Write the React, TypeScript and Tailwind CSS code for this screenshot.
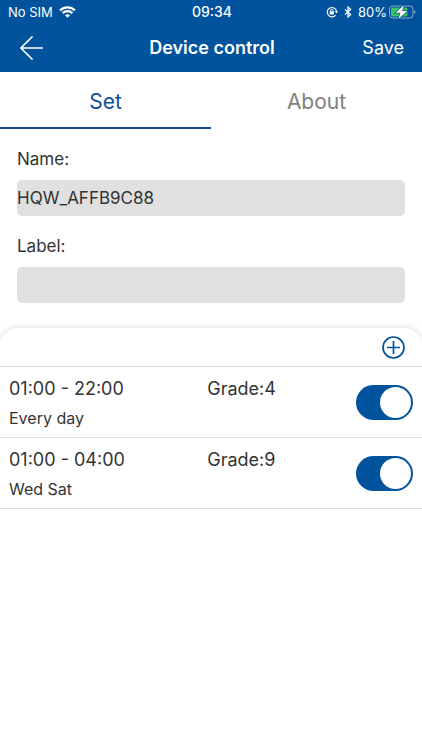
import { useState } from "react";

type Schedule = { id: number; time: string; grade: string; days: string; on: boolean };

const initialSchedules: Schedule[] = [
  { id: 1, time: "01:00 - 22:00", grade: "Grade:4", days: "Every day", on: true },
  { id: 2, time: "01:00 - 04:00", grade: "Grade:9", days: "Wed Sat", on: true },
];

function WifiIcon() {
  return (
    <svg width="17" height="12" viewBox="0 0 17 12" fill="none" stroke="white" strokeWidth="2.2" aria-hidden="true">
      <path d="M1 4.4a10.8 10.8 0 0 1 15 0" />
      <path d="M3.6 7.1a7 7 0 0 1 9.8 0" />
      <path d="M8.5 11.8 6 9.3a3.7 3.7 0 0 1 5 0z" fill="white" stroke="none" />
    </svg>
  );
}

function RotationLockIcon() {
  return (
    <svg width="12" height="12" viewBox="0 0 12 12" fill="none" stroke="white" aria-hidden="true">
      <path d="M9.6 9.2A4.7 4.7 0 1 1 10.5 5" strokeWidth="1.1" />
      <path d="M8.9 5h3.1l-1.5 2.4z" fill="white" stroke="none" />
      <rect x="3.6" y="5.2" width="4.4" height="3.3" rx=".4" fill="white" stroke="none" />
      <path d="M4.6 5.4v-.9a1.2 1.2 0 0 1 2.4 0v.9" strokeWidth=".9" />
    </svg>
  );
}

function BluetoothIcon() {
  return (
    <svg width="8" height="12" viewBox="0 0 8 12" fill="none" stroke="white" strokeWidth="1.2" aria-hidden="true">
      <path d="m1 3.5 5.7 5L4 11V1l2.7 2.5L1 8.5" />
    </svg>
  );
}

function BatteryIcon() {
  return (
    <svg width="27" height="14" viewBox="0 0 27 14" aria-hidden="true">
      <rect x=".5" y="1" width="23.5" height="12" rx="3.4" fill="none" stroke="#8aaacb" />
      <path d="M25.2 5v4c1.6-.5 1.6-3.5 0-4z" fill="#8aaacb" />
      <rect x="2" y="2.5" width="16.5" height="9" rx="2" fill="#3bc45c" />
      <path d="M14.8.2 6.6 7.8h4.7L9.6 13.8l8.6-7.8h-5z" fill="white" stroke="#00539c" strokeWidth="1.4" paintOrder="stroke" />
    </svg>
  );
}

function Header() {
  return (
    <header className="bg-[#00539c] text-white">
      <div className="grid h-6 grid-cols-3 items-center pr-1.5 pl-2 text-[13px] leading-6">
        <div className="flex items-center gap-1.5">
          <span>No SIM</span>
          <WifiIcon />
        </div>
        <span className="text-center text-sm leading-6 font-medium">09:34</span>
        <div className="flex items-center justify-end gap-1.5">
          <RotationLockIcon />
          <BluetoothIcon />
          <div className="flex items-center gap-0.5">
            <span>80%</span>
            <BatteryIcon />
          </div>
        </div>
      </div>
      <div className="grid h-12 grid-cols-[1fr_auto_1fr] items-center pr-[18px] pl-5">
        <button type="button" aria-label="Back" className="justify-self-start">
          <svg width="24" height="24" viewBox="0 0 24 24" fill="none" stroke="white" strokeWidth="1.7" aria-hidden="true">
            <path d="M12.5.5.9 12l11.6 11.5M.9 12H23" />
          </svg>
        </button>
        <h1 className="text-lg font-semibold">Device control</h1>
        <button type="button" className="justify-self-end text-lg">
          Save
        </button>
      </div>
    </header>
  );
}

function Field({ id, label, initial }: { id: string; label: string; initial: string }) {
  const [value, setValue] = useState(initial);
  return (
    <div className="flex flex-col gap-[7px]">
      <label htmlFor={id} className="text-[17px] leading-7">
        {label}
      </label>
      <input
        id={id}
        type="text"
        value={value}
        onChange={(e) => setValue(e.target.value)}
        className="h-9 w-full rounded-[5px] bg-[#e0e0e0] text-[17px] outline-none"
      />
    </div>
  );
}

export default function App() {
  const [tab, setTab] = useState("Set");
  const [schedules, setSchedules] = useState(initialSchedules);

  const toggle = (id: number) =>
    setSchedules((all) => all.map((s) => (s.id === id ? { ...s, on: !s.on } : s)));

  return (
    <div className="min-h-screen bg-white font-['Inter','Liberation_Sans',sans-serif] text-[#333333]">
      <Header />
      <nav className="grid grid-cols-2">
        {["Set", "About"].map((name) => (
          <button
            key={name}
            type="button"
            onClick={() => setTab(name)}
            className={
              tab === name
                ? "h-[57px] border-b-2 border-[#134a91] pt-1 text-[21px] text-[#0f4f98]"
                : "h-[57px] border-b-2 border-transparent pt-1 text-[21px] text-[#808080]"
            }
          >
            {name}
          </button>
        ))}
      </nav>
      <main>
        <form className="flex flex-col gap-4 px-[17px] pt-4 pb-[25px]">
          <Field id="device-name" label="Name:" initial="HQW_AFFB9C88" />
          <Field id="device-label" label="Label:" initial="" />
        </form>
        <section className="rounded-t-[18px] shadow-[0_-1px_6px_rgba(0,0,0,0.12)] [clip-path:inset(-10px_0_0_0)]">
          <div className="flex h-[39px] items-center justify-end border-b border-[#dcdcdc] pr-[17px]">
            <button type="button" aria-label="Add schedule">
              <svg width="23" height="23" viewBox="0 0 23 23" fill="none" stroke="#00539c" strokeWidth="1.7" aria-hidden="true">
                <circle cx="11.5" cy="11.5" r="10.5" />
                <path d="M11.5 5v13M5 11.5h13" />
              </svg>
            </button>
          </div>
          <ul>
            {schedules.map((s) => (
              <li key={s.id} className="flex items-center border-b border-[#dcdcdc] bg-white px-[9px] py-2">
                <div className="grid flex-1 grid-cols-[4fr_3fr] gap-y-1">
                  <span className="text-lg leading-7">{s.time}</span>
                  <span className="text-lg leading-7">{s.grade}</span>
                  <span className="col-span-2 text-base leading-[22px]">{s.days}</span>
                </div>
                <label className="flex cursor-pointer">
                  <input
                    type="checkbox"
                    role="switch"
                    aria-label={`${s.time} ${s.grade}`}
                    checked={s.on}
                    onChange={() => toggle(s.id)}
                    className="peer sr-only"
                  />
                  <span className="flex h-[35px] w-[57px] items-center rounded-full bg-[#c8c8c8] p-0.5 peer-checked:justify-end peer-checked:bg-[#00539c]">
                    <span className="size-[31px] rounded-full bg-white" />
                  </span>
                </label>
              </li>
            ))}
          </ul>
        </section>
      </main>
    </div>
  );
}
